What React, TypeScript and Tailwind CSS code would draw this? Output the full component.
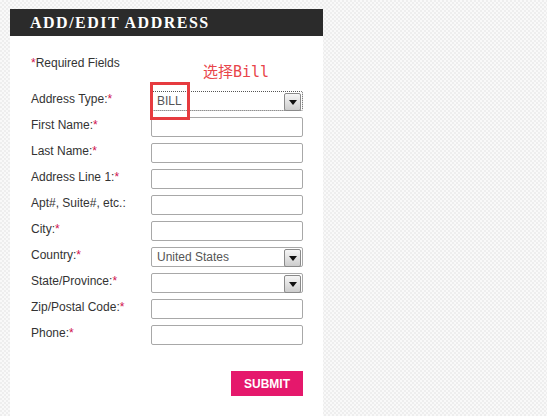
const fields = [
  { label: 'First Name:', required: true },
  { label: 'Last Name:', required: true },
  { label: 'Address Line 1:', required: true },
  { label: 'Apt#, Suite#, etc.:', required: false },
  { label: 'City:', required: true },
];

function Star() {
  return <span className="text-[#d0124e]">*</span>;
}

function Arrow() {
  return (
    <span className="absolute right-[1px] top-[1px] flex h-[18px] w-[17px] items-center justify-center rounded-[2px] border border-[#8a8a8a] bg-gradient-to-b from-[#f6f6f6] to-[#cdcdcd]">
      <svg width="8" height="5" viewBox="0 0 8 5">
        <path d="M0 0h8L4 5z" fill="#111" />
      </svg>
    </span>
  );
}

function TextInput() {
  return <div className="h-[20px] w-[152px] rounded-[2px] border border-[#a8a8a8] bg-white" />;
}

function Select({ value, dotted }: { value?: string; dotted?: boolean }) {
  return (
    <div
      className={`relative flex h-[20px] w-[152px] items-center rounded-[2px] bg-white pl-[5px] ${
        dotted ? 'border border-dotted border-[#555]' : 'border border-[#a8a8a8]'
      }`}
    >
      <span className="text-[12px] text-[#555]">{value}</span>
      <Arrow />
    </div>
  );
}

function Row({ label, required, children }: { label: string; required?: boolean; children: React.ReactNode }) {
  return (
    <div className="grid grid-cols-[120px_152px] items-start">
      <div className="text-[12px] leading-[16px] text-[#333]">
        {label}
        {required && <Star />}
      </div>
      {children}
    </div>
  );
}

export default function App() {
  return (
    <div
      className="min-h-[416px] w-full bg-[#f4f4f4] bg-[image:repeating-conic-gradient(#eeeeee_0%_25%,#f9f9f9_0%_50%)] bg-[length:4px_4px] pl-[10px] pt-[9px]"
      style={{ fontFamily: '"Liberation Sans", Arial, sans-serif' }}
    >
      <div className="flex min-h-[407px] w-[313px] flex-col bg-white">
        {/* Header bar */}
        <div className="flex h-[27px] items-center bg-[#2b2b2b] pl-[20px]">
          <h2
            className="text-[16px] font-bold tracking-[1.5px] text-white"
            style={{ fontFamily: '"Liberation Serif", "Times New Roman", serif' }}
          >
            ADD/EDIT ADDRESS
          </h2>
        </div>

        <div className="flex flex-col pl-[21px] pt-[19px]">
          <p className="text-[12px] leading-[16px] text-[#333]">
            <Star />
            Required Fields
          </p>

          <div className="mt-[20px] flex flex-col gap-[6px]">
            <Row label="Address Type:" required>
              <div className="relative">
                <Select value="BILL" dotted />
                {/* annotation */}
                <div className="absolute left-[-1px] top-[-9px] h-[38px] w-[40px] border-[3px] border-[#e63b3f]" />
                <span
                  className="absolute left-[52px] top-[-29px] whitespace-nowrap text-[15px] leading-[20px] text-[#e8454a]"
                  style={{ fontFamily: '"DejaVu Sans Mono", "Noto Sans CJK SC", monospace' }}
                >
                  选择Bill
                </span>
              </div>
            </Row>
            {fields.map((f) => (
              <Row key={f.label} label={f.label} required={f.required}>
                <TextInput />
              </Row>
            ))}
            <Row label="Country:" required>
              <Select value="United States" />
            </Row>
            <Row label="State/Province:" required>
              <Select />
            </Row>
            <Row label="Zip/Postal Code:" required>
              <TextInput />
            </Row>
            <Row label="Phone:" required>
              <TextInput />
            </Row>
          </div>

          <div className="mt-[26px] flex w-[272px] justify-end">
            <button className="flex h-[25px] w-[72px] items-center justify-center bg-[#e5186c] text-[12px] font-bold text-white">
              SUBMIT
            </button>
          </div>
        </div>
      </div>
    </div>
  );
}
